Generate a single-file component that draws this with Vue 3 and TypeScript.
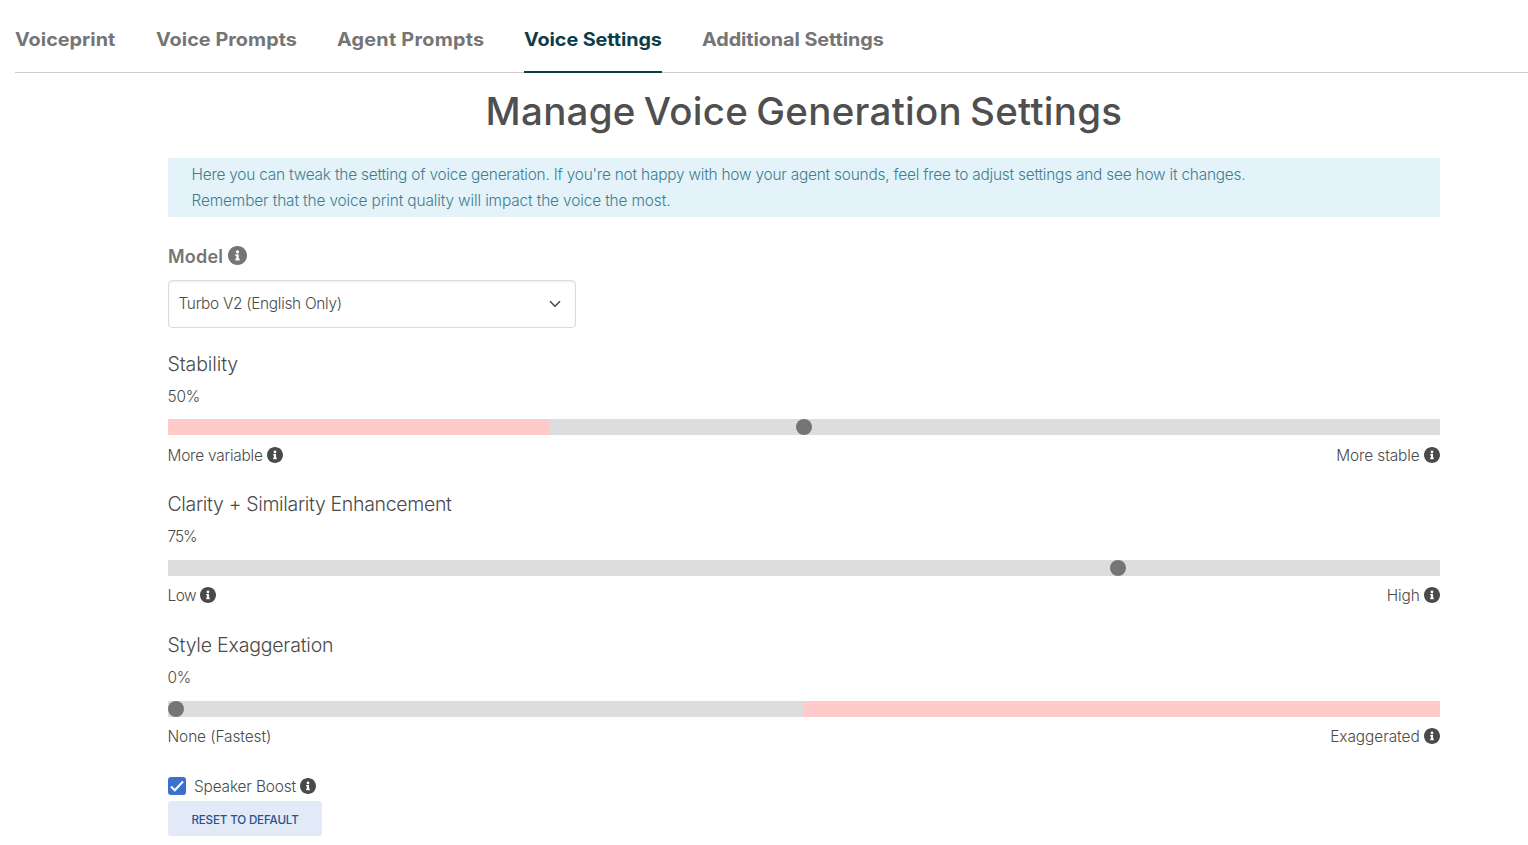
<script setup lang="ts">
import { ref } from 'vue'

interface Tab { label: string; key: string }
interface Slider {
  key: string
  title: string
  value: number
  low: string
  lowInfo: boolean
  high: string
  warn?: 'start' | 'end'
}

const tabs: Tab[] = [
  { label: 'Voiceprint', key: 'print' },
  { label: 'Voice Prompts', key: 'voice' },
  { label: 'Agent Prompts', key: 'agent' },
  { label: 'Voice Settings', key: 'settings' },
  { label: 'Additional Settings', key: 'additional' },
]
const active = ref('settings')

const sliders = ref<Slider[]>([
  { key: 'stability', title: 'Stability', value: 50, low: 'More variable', lowInfo: true, high: 'More stable', warn: 'start' },
  { key: 'clarity', title: 'Clarity + Similarity Enhancement', value: 75, low: 'Low', lowInfo: true, high: 'High' },
  { key: 'style', title: 'Style Exaggeration', value: 0, low: 'None (Fastest)', lowInfo: false, high: 'Exaggerated', warn: 'end' },
])
const boost = ref(true)
const infoPath = 'M256 8C119.043 8 8 119.083 8 256c0 136.997 111.043 248 248 248s248-111.003 248-248C504 119.083 392.957 8 256 8zm0 110c23.196 0 42 18.804 42 42s-18.804 42-42 42-42-18.804-42-42 18.804-42 42-42zm56 254c0 6.627-5.373 12-12 12h-88c-6.627 0-12-5.373-12-12v-24c0-6.627 5.373-12 12-12h12v-64h-12c-6.627 0-12-5.373-12-12v-24c0-6.627 5.373-12 12-12h64c6.627 0 12 5.373 12 12v100h12c6.627 0 12 5.373 12 12v24z'
</script>

<template>
  <div class="page">
    <nav class="tabs">
      <button v-for="t in tabs" :key="t.key" class="tab" :class="['tab-' + t.key, { active: active === t.key }]" @click="active = t.key"><span>{{ t.label }}</span></button>
    </nav>
    <main class="content">
      <h1><span>Manage Voice Generation Settings</span></h1>
      <div class="notice">
        <p class="n1">Here you can tweak the setting of voice generation. If you're not happy with how your agent sounds, feel free to adjust settings and see how it changes.</p>
        <p class="n2">Remember that the voice print quality will impact the voice the most.</p>
      </div>
      <div class="model"><span>Model</span><svg class="info" viewBox="8 8 496 496"><path :d="infoPath" /></svg></div>
      <div class="select">
        <span>Turbo V2 (English Only)</span>
        <svg class="chevron" viewBox="0 0 12 8"><path d="M1 1.300L6 6.300L11 1.300" /></svg>
      </div>
      <section v-for="s in sliders" :key="s.key" class="slider" :class="s.key">
        <h2>{{ s.title }}</h2>
        <div class="value">{{ s.value }}%</div>
        <div class="track" :class="s.warn">
          <i class="thumb" :style="{ left: `calc((100% - 16px) * ${s.value / 100})` }"></i>
        </div>
        <div class="ends">
          <div class="end"><span class="low">{{ s.low }}</span><svg v-if="s.lowInfo" class="info" viewBox="8 8 496 496"><path :d="infoPath" /></svg></div>
          <div class="end"><span class="high">{{ s.high }}</span><svg class="info" viewBox="8 8 496 496"><path :d="infoPath" /></svg></div>
        </div>
      </section>
      <div class="boost" @click="boost = !boost">
        <span class="check" :class="{ on: boost }"><svg v-if="boost" viewBox="0 0 18 18"><path d="M3 9.500L6.800 13.200L15 4.500" /></svg></span>
        <span class="boost-label">Speaker Boost</span>
        <svg class="info" viewBox="8 8 496 496"><path :d="infoPath" /></svg>
      </div>
      <button class="reset">RESET TO DEFAULT</button>
    </main>
  </div>
</template>

<style>
body { margin: 0; background: #fff; overflow: hidden; }
</style>

<style scoped>
.page { height: 845px; overflow: hidden; font-family: Inter, "Liberation Sans", sans-serif; font-size: 15.400px; font-weight: 300; color: #4a4a4a; white-space: nowrap; }
button { font-family: inherit; border: 0; padding: 0; white-space: nowrap; }
.tabs { display: flex; gap: 40px; height: 72px; margin-left: 15px; border-bottom: 1px solid #ccc; }
.tab { height: 73px; padding-top: 7px; box-sizing: border-box; background: none; border-bottom: 2px solid transparent; font-size: 18.500px; font-weight: 700; color: #757575; text-align: left; }
.tab span { display: inline-block; transform: scaleX(1.070); transform-origin: left center; }
.tab.active { color: #0d3c4b; border-bottom-color: #0d3c4b; }
.tab-print { width: 101px; letter-spacing: .02px; }
.tab-voice { width: 141px; letter-spacing: .03px; }
.tab-agent { width: 147px; letter-spacing: .23px; }
.tab-settings { width: 138px; letter-spacing: -.08px; }
.tab-additional { width: 182px; letter-spacing: -.07px; }
.content { width: 1272px; margin-left: 168px; }
h1 { margin: 14px 0 0; height: 71px; line-height: 48px; text-align: center; font-size: 38.500px; font-weight: 500; letter-spacing: .28px; word-spacing: -2.500px; color: #4f4f4f; }
.notice { height: 59px; box-sizing: border-box; padding: 4px 23.500px 2px; background: #e3f3f9; color: #3f7d91; }
.notice p { margin: 0; line-height: 26px; }
.n1 { letter-spacing: -.207px; }
.n2 { letter-spacing: -.125px; }
.model { display: flex; align-items: center; height: 24px; margin-top: 27px; font-size: 18px; font-weight: 600; letter-spacing: .2px; color: #757575; gap: 5px; }
.info { display: block; width: 16px; height: 16px; fill: #4a4a4a; flex: none; }
.model .info { width: 19px; height: 19px; margin-top: -1px; fill: #757575; }
.select { display: flex; align-items: center; justify-content: space-between; width: 408px; height: 48px; box-sizing: border-box; margin-top: 12px; padding: 0 14px 0 9.500px; border: 1px solid #dcdcdc; border-radius: 4px; box-shadow: inset 0 1px 2px rgba(0, 0, 0, .075); }
.select span { letter-spacing: -.29px; padding-bottom: 1px; }
.chevron { width: 12px; height: 8px; fill: none; stroke: #444; stroke-width: 1.500; }
.slider { margin-top: 23px; }
.slider.style { margin-top: 24px; }
.slider h2 { margin: 0 0 0 -.5px; height: 26px; line-height: 26px; font-size: 19.500px; font-weight: 300; }
.stability h2 { letter-spacing: -.1px; }
.clarity h2 { letter-spacing: -.33px; }
.style h2 { letter-spacing: -.2px; }
.value { height: 25px; line-height: 26px; margin: 7px 0 0 -.5px; letter-spacing: -.2px; }
.clarity .value { letter-spacing: -1px; }
.track { position: relative; height: 16px; margin-top: 11px; background: #ddd; }
.stability .track { margin-top: 10px; }
.track.start { background: linear-gradient(90deg, #ffcaca 30%, #ddd 30%); }
.track.end { background: linear-gradient(90deg, #ddd 50%, #ffcaca 50%); }
.thumb { position: absolute; top: 0; width: 16px; height: 16px; border-radius: 50%; background: #757575; }
.ends { display: flex; justify-content: space-between; height: 26px; margin: 6px .4px 0 -.5px; }
.stability .ends { margin-top: 7px; }
.end { display: flex; align-items: center; }
.ends .end { gap: 4px; }
.low { letter-spacing: -.13px; }
.high { letter-spacing: -.1px; }
.stability .low { letter-spacing: -.21px; }
.clarity .low { letter-spacing: -.5px; }
.style .low { letter-spacing: -.08px; }
.style .high { letter-spacing: -.04px; }
.boost { display: flex; align-items: center; height: 24px; margin-top: 25px; }
.check { width: 18px; height: 18px; box-sizing: border-box; border-radius: 3px; border: 1px solid #999; }
.check.on { border: 0; background: #3b71ca; }
.check svg { display: block; width: 18px; height: 18px; fill: none; stroke: #fff; stroke-width: 2; }
.boost-label { margin: 0 4px 0 8px; letter-spacing: -.15px; }
.reset { display: block; width: 154px; height: 35px; margin-top: 3px; padding-top: 2px; border-radius: 3px; background: #e2eaf7; color: #285192; font-size: 11.600px; font-weight: 500; letter-spacing: -.15px; }
</style>
